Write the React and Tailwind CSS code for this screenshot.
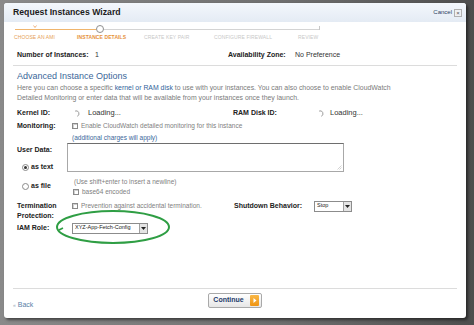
import React from "react";

const Check = () => (
  <span className="inline-block w-[6px] h-[6px] border border-[#8a8a8a] bg-white shadow-[inset_1px_1px_0_#d0d0d0] shrink-0" />
);

const Radio = ({ on }) => (
  <span className="inline-flex w-[7px] h-[7px] rounded-full border border-[#8a8a8a] bg-white items-center justify-center shrink-0">
    {on && <span className="w-[3px] h-[3px] rounded-full bg-[#333]" />}
  </span>
);

const Spinner = () => (
  <svg width="7" height="7" viewBox="0 0 10 10" className="shrink-0">
    <path d="M3 1.5 A4 4 0 0 1 6 9" fill="none" stroke="#9a9a9a" strokeWidth="1.4" />
  </svg>
);

const Select = ({ label, w }) => (
  <div className={`flex items-center h-[11px] border border-[#8c8c8c] bg-white ${w}`}>
    <span className="flex-1 pl-[2px] text-[5.5px] leading-none text-[#222] whitespace-nowrap overflow-hidden">{label}</span>
    <span className="w-[8px] h-[9px] bg-[#e4e4e4] border-l border-[#a0a0a0] flex items-center justify-center">
      <svg width="5" height="3" viewBox="0 0 5 3"><path d="M0 0 H5 L2.5 3 Z" fill="#222" /></svg>
    </span>
  </div>
);

export default function App() {
  return (
    <div className="w-[474px] h-[325px] overflow-hidden bg-[linear-gradient(90deg,#8a8a8a,#6e6e6e_60%,#4e4e4e)] pt-[3px] pl-[4px] font-['Liberation_Sans',Arial,sans-serif]">
      <div className="relative w-[462px] h-[315px] bg-white rounded-[3px] shadow-[2px_2px_3px_rgba(0,0,0,0.5)] flex flex-col">
        {/* Title bar */}
        <div className="h-[19px] shrink-0 flex items-center justify-between pl-[9px] pr-[4px] rounded-t-[3px] bg-[linear-gradient(#f3f7fc,#e4ebf4)]">
          <span className="text-[8.7px] font-bold text-[#1b1b1b]">Request Instances Wizard</span>
          <span className="flex items-center gap-[2px]">
            <span className="text-[6px] text-[#2a3e63]">Cancel</span>
            <span className="w-[8px] h-[8px] border border-[#b0b0b0] bg-[#eef0f3] flex items-center justify-center text-[6px] leading-none text-[#555]">×</span>
          </span>
        </div>

        {/* Track */}
        <div className="relative mt-[3px] h-[8px] ml-[11px] w-[305px] flex items-center shrink-0">
          <div className="w-[81px] h-px bg-[#f0b56c]" />
          <div className="w-[8px] h-[8px] rounded-full border border-[#8f8f8f] bg-white shrink-0" />
          <div className="flex-1 h-px bg-[#d4d4d4]" />
          <div className="w-px h-[4px] bg-[#c8c8c8] -mt-[3px]" />
          <svg className="absolute left-[18px] top-0" width="4" height="3" viewBox="0 0 4 3">
            <path d="M0.5 0.5 L2 2.5 L3.5 0.5" fill="none" stroke="#e8a060" strokeWidth="0.8" />
          </svg>
        </div>

        {/* Step labels */}
        <div className="mt-[1px] h-[8px] flex items-center pl-[10px] text-[5px] tracking-[0.1px] whitespace-nowrap shrink-0">
          <span className="w-[63px] text-[#e6a056]">CHOOSE AN AMI</span>
          <span className="w-[67px] text-[#e6913a] font-bold">INSTANCE DETAILS</span>
          <span className="w-[70px] text-[#c8c8c8]">CREATE KEY PAIR</span>
          <span className="w-[84px] text-[#c8c8c8]">CONFIGURE FIREWALL</span>
          <span className="text-[#c8c8c8]">REVIEW</span>
        </div>

        {/* Main content */}
        <div className="mx-[9px] flex flex-col flex-1">
          <div className="mt-[7px] h-[12px] flex items-center pl-[4px] text-[7px] shrink-0">
            <span className="font-bold text-[#222] w-[78px]">Number of Instances:</span>
            <span className="text-[#333] w-[133px]">1</span>
            <span className="font-bold text-[#222] w-[67px]">Availability Zone:</span>
            <span className="text-[#333]">No Preference</span>
          </div>
          <div className="mt-[4px] border-t border-[#dcdcdc] shrink-0" />

          <div className="mt-[5px] h-[12px] flex items-center pl-[4px] text-[9px] text-[#3b679a] shrink-0">
            Advanced Instance Options
          </div>
          <div className="pl-[4px] text-[6.9px] leading-[10px] text-[#7a7a7a] shrink-0">
            <div className="whitespace-nowrap">Here you can choose a specific <span className="text-[#2f5f9a]">kernel or RAM disk</span> to use with your instances. You can also choose to enable CloudWatch</div>
            <div className="whitespace-nowrap">Detailed Monitoring or enter data that will be available from your instances once they launch.</div>
          </div>

          {/* Kernel row */}
          <div className="mt-[4px] h-[12px] flex items-center pl-[4px] text-[7px] shrink-0">
            <span className="font-bold text-[#222] w-[56px]">Kernel ID:</span>
            <span className="w-[160px] flex items-center"><Spinner /><span className="ml-[8px] text-[7.5px] text-[#333]">Loading...</span></span>
            <span className="font-bold text-[#222] w-[84px]">RAM Disk ID:</span>
            <span className="flex items-center"><Spinner /><span className="ml-[6px] text-[7.5px] text-[#333]">Loading...</span></span>
          </div>

          {/* Monitoring */}
          <div className="mt-[1px] h-[12px] flex items-center pl-[4px] shrink-0">
            <span className="font-bold text-[7px] text-[#222] w-[55px]">Monitoring:</span>
            <Check />
            <span className="ml-[3px] text-[6.5px] text-[#808080] whitespace-nowrap">Enable CloudWatch detailed monitoring for this instance</span>
          </div>
          <div className="mt-[1px] h-[9px] flex items-center pl-[59px] text-[6.5px] text-[#3b679a] shrink-0">
            (additional charges will apply)
          </div>

          {/* User data */}
          <div className="h-[56px] flex shrink-0">
            <div className="w-[58px] flex flex-col pl-[4px]">
              <div className="mt-[3px] h-[10px] flex items-center font-bold text-[7px] text-[#222]">User Data:</div>
              <div className="mt-[7px] h-[10px] flex items-center pl-[5px] gap-[2px]"><Radio on /><span className="font-bold text-[7px] text-[#222]">as text</span></div>
              <div className="mt-[9px] h-[10px] flex items-center pl-[5px] gap-[2px]"><Radio /><span className="font-bold text-[7px] text-[#222]">as file</span></div>
            </div>
            <div className="flex flex-col">
              <div className="relative ml-[-4px] mt-[1px] w-[277px] h-[29px] border border-[#a8a8a8] border-t-[#6e6e6e] bg-white">
                <svg className="absolute right-[1px] bottom-[1px]" width="5" height="5" viewBox="0 0 5 5">
                  <path d="M4.5 0.5 L0.5 4.5 M4.5 2.5 L2.5 4.5" stroke="#c0c0c0" strokeWidth="0.7" />
                </svg>
              </div>
              <div className="mt-[5px] h-[9px] flex items-center pl-[3px] text-[6.5px] text-[#808080] whitespace-nowrap">(Use shift+enter to insert a newline)</div>
              <div className="mt-[1px] h-[9px] flex items-center gap-[3px] pl-[2px]"><Check /><span className="text-[6.5px] text-[#808080]">base64 encoded</span></div>
            </div>
          </div>

          {/* Termination */}
          <div className="mt-[3px] h-[20px] flex pl-[4px] shrink-0">
            <div className="w-[55px] font-bold text-[7px] leading-[10px] text-[#222]">
              <div>Termination</div>
              <div>Protection:</div>
            </div>
            <div className="w-[162px] h-[10px] flex items-center gap-[3px]">
              <Check />
              <span className="text-[6.5px] text-[#808080] whitespace-nowrap">Prevention against accidental termination.</span>
            </div>
            <div className="h-[10px] flex items-center font-bold text-[7px] text-[#222] w-[80px]">Shutdown Behavior:</div>
            <div className="h-[10px] flex items-center"><Select label="Stop" w="w-[38px]" /></div>
          </div>

          {/* IAM role */}
          <div className="mt-[1px] h-[12px] flex items-center pl-[4px] shrink-0">
            <span className="font-bold text-[7px] text-[#222] w-[55px]">IAM Role:</span>
            <Select label="XYZ-App-Fetch-Config" w="w-[76px]" />
          </div>

          <div className="flex-1" />
          <div className="border-t border-[#dcdcdc] shrink-0" />
          <div className="h-[29px] flex items-start shrink-0">
            <div className="mt-[11px] flex items-center gap-[2px] text-[7px] text-[#5a7fa8]">
              <span className="text-[5px] text-[#9ab]">«</span>
              <span>Back</span>
            </div>
            <div className="ml-[175px] mt-[4px] h-[15px] w-[54px] flex items-center justify-between pl-[4px] pr-[2px] border border-[#a9a9a9] rounded-[2px] bg-[linear-gradient(#ffffff,#e6e6e6)]">
              <span className="text-[7px] font-bold text-[#243b6b]">Continue</span>
              <span className="w-[9px] h-[11px] bg-[linear-gradient(#f9b848,#ef9412)] rounded-[1px] flex items-center justify-center">
                <svg width="4" height="5" viewBox="0 0 4 5"><path d="M0.5 0 L3.5 2.5 L0.5 5 Z" fill="white" /></svg>
              </span>
            </div>
          </div>
        </div>

        {/* Green ellipse annotation */}
        <svg className="absolute left-[49px] top-[205px] pointer-events-none" width="120" height="38" viewBox="0 0 120 38">
          <ellipse cx="60" cy="19" rx="56" ry="16" fill="none" stroke="#2f9e44" strokeWidth="2" />
          <path d="M6 22 L10 20" stroke="#2f9e44" strokeWidth="1.6" />
        </svg>
      </div>
    </div>
  );
}
